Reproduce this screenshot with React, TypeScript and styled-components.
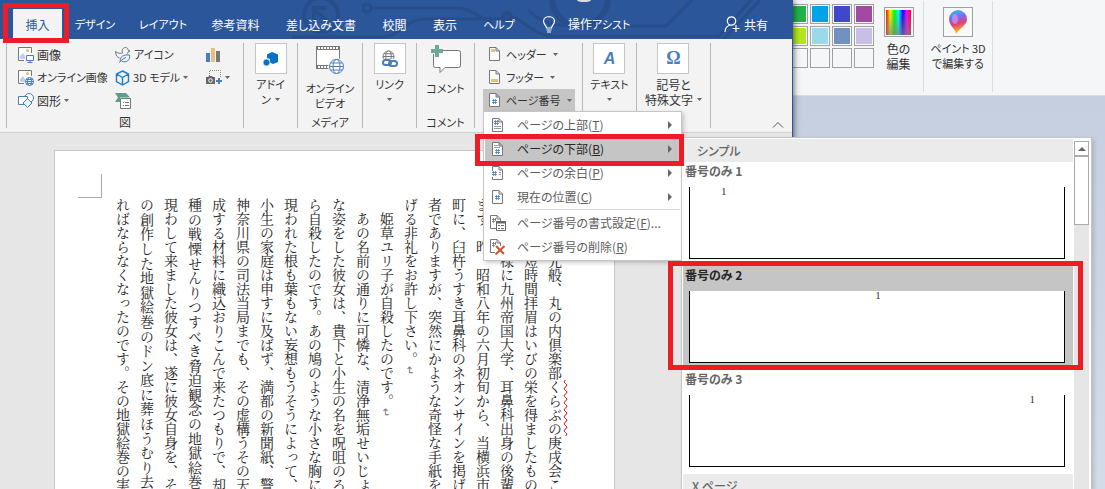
import React from "react";
import styled, { createGlobalStyle, css } from "styled-components";

const blue = "#2b579a";
const red = "#ee1c24";
const accent = "#4a7ebb";

const GlobalStyle = createGlobalStyle`
  * { box-sizing: border-box; }
  body {
    margin: 0;
    font-family: "Noto Sans CJK JP", "Noto Sans", sans-serif;
    font-size: 12px;
    line-height: 15px;
    font-feature-settings: "palt";
    color: #333;
  }
  button { font: inherit; font-feature-settings: inherit; color: inherit; border: 0; padding: 0; margin: 0; background: none; white-space: nowrap; }
  ul { list-style: none; margin: 0; padding: 0; }
  svg { display: block; flex: none; }
`;

const marked = css<{ $mark?: string }>`
  ${(p) =>
    p.$mark &&
    css`
      position: relative;
      &::after {
        content: "";
        position: absolute;
        z-index: 5;
        inset: ${p.$mark};
        border: 5px solid ${red};
        pointer-events: none;
      }
    `}
`;

const Desktop = styled.div`
  display: flex;
  height: 100vh;
  overflow: hidden;
  background: linear-gradient(#c5cfe0 100px, #d3dcea);
`;

/* Kana are set one size smaller than kanji, as in a compact UI face. */
const Kana = styled.span`
  font-size: 11px;
`;

/* ---------- word processor window ---------- */

const WordWindow = styled.main`
  position: relative;
  z-index: 1;
  flex: 1;
  min-width: 0;
  display: flex;
  flex-direction: column;
  border-right: 1px solid ${blue};
  box-shadow: 1px 0 6px rgba(0, 0, 0, 0.55);
`;

const TabBar = styled.nav`
  position: relative;
  display: flex;
  align-items: flex-end;
  height: 39px;
  padding-left: 13px;
  background: ${blue};
  color: #fff;
`;

const Circuit = styled.svg`
  position: absolute;
  right: 0;
  top: 0;
`;

const Tab = styled.button<{ $w: number; $active?: boolean; $mark?: string }>`
  position: relative;
  width: ${(p) => p.$w}px;
  height: 30px;
  background: ${(p) => (p.$active ? "#f3f3f3" : "transparent")};
  color: ${(p) => (p.$active ? blue : "#fff")};
  ${marked}
`;

const Assist = styled.button`
  position: relative;
  display: flex;
  align-items: center;
  gap: 12px;
  height: 30px;
  margin-left: 14px;
`;

const Share = styled(Assist)`
  gap: 4px;
  margin-left: auto;
  margin-right: 24px;
`;

const Ribbon = styled.div`
  position: relative;
  z-index: 2;
  display: flex;
  padding: 4px 0 4px 6px;
  background: #f3f3f3;
  border-bottom: 1px solid #d0d0d0;
`;

const Group = styled.section<{ $w: number; $first?: boolean }>`
  display: flex;
  flex-direction: column;
  align-items: center;
  width: ${(p) => p.$w}px;
  height: 85px;
  border-right: 1px solid #b8b8b8;
  border-left: ${(p) => (p.$first ? "1px solid #b8b8b8" : "0")};
`;

const GroupLabel = styled.span`
  margin-top: auto;
  line-height: 12px;
`;

const Illustrations = styled.div`
  align-self: stretch;
  display: grid;
  grid-template-columns: 97px 91px 1fr;
  grid-auto-rows: 23px;
  padding-left: 11px;
`;

const SmallButton = styled.button`
  display: flex;
  align-items: center;
  gap: 3px;
`;

const BigButton = styled.button`
  display: flex;
  flex-direction: column;
  align-items: center;
  gap: 3px;
`;

const PlainBigButton = styled(BigButton)`
  gap: 0;
  svg { margin: 2px 0 6px; }
`;

const IconBox = styled.span`
  display: flex;
  align-items: center;
  justify-content: center;
  width: 32px;
  height: 31px;
  border: 1px solid #c6c6c6;
  background: #fff;
  color: ${accent};
  font: bold 18px "Liberation Serif", serif;
`;

const ItalicMark = styled.span`
  font: italic bold 16px "Liberation Sans", sans-serif;
`;

const Caption = styled.span`
  display: flex;
  flex-direction: column;
  align-items: center;
`;

const CaptionLine = styled.span<{ $kana?: boolean }>`
  display: flex;
  align-items: center;
  gap: 4px;
  height: 15px;
  font-size: ${(p) => (p.$kana ? 11 : 12)}px;
`;

const Stack = styled.div`
  align-self: stretch;
  display: grid;
  grid-auto-rows: 23px;
  padding: 0 7px 0 8px;
`;

const MenuAnchor = styled.div`
  position: relative;
  height: 22px;
`;

const RowButton = styled.button<{ $open?: boolean }>`
  display: flex;
  align-items: center;
  gap: 6px;
  width: 100%;
  height: 22px;
  padding-left: 5px;
  font-size: 11px;
  background: ${(p) => (p.$open ? "#c5c5c5" : "transparent")};
`;

const Collapse = styled.button`
  align-self: flex-end;
  margin-left: auto;
  margin-right: 8px;
`;

/* ---------- drop-down menu and gallery ---------- */

const Menu = styled.ul`
  position: absolute;
  top: 100%;
  left: 0;
  width: 199px;
  padding: 1px;
  border: 1px solid #c6c6c6;
  background: #fff;
  box-shadow: 2px 2px 4px rgba(0, 0, 0, 0.2);
`;

const MenuItem = styled.li<{ $active?: boolean; $mark?: string }>`
  height: 24px;
  background: ${(p) => (p.$active ? "#c5c5c5" : "transparent")};
  color: ${(p) => (p.$active ? "#262626" : "#5c5c5c")};
  ${marked}
`;

const MenuButton = styled.button`
  display: grid;
  grid-template-columns: 28px 1fr 12px;
  align-items: center;
  width: 100%;
  height: 24px;
  padding-left: 4px;
  text-align: left;
`;

const MenuText = styled.span`
  padding-bottom: 2px;
`;

const MenuRule = styled.li`
  height: 1px;
  margin: 0 0 1px 32px;
  background: #d4d8de;
`;

const Gallery = styled.div`
  position: absolute;
  left: calc(100% + 1px);
  top: 0;
  display: flex;
  gap: 1px;
  width: 411px;
  padding: 1px;
  border: 1px solid #c6c6c6;
  background: #fff;
  color: #666;
  box-shadow: 2px 2px 4px rgba(0, 0, 0, 0.15);
`;

const GalleryList = styled.div`
  flex: 1;
`;

const GalleryHeading = styled.h2<{ $indent: number }>`
  margin: 0;
  padding-left: ${(p) => p.$indent}px;
  background: #ebebeb;
  font-size: 12px;
  line-height: 23px;
  font-weight: 500;
`;

const GalleryItem = styled.button<{ $active?: boolean; $mark?: string }>`
  display: block;
  width: 100%;
  height: 104px;
  text-align: left;
  font-weight: bold;
  background: ${(p) => (p.$active ? "#c5c5c5" : "transparent")};
  color: ${(p) => (p.$active ? "#262626" : "#666")};
  ${marked}
`;

const GalleryName = styled.span`
  display: block;
  height: 25px;
  padding-left: 2px;
  line-height: 18px;
`;

const Thumb = styled.span<{ $align: string }>`
  display: block;
  height: 72px;
  margin: 0 8px 7px 6px;
  padding: 0 29px 0 31px;
  border: 1px solid #000;
  border-top: 0;
  background: #fff;
  color: #333;
  font: 11px/9px "Liberation Serif", serif;
  text-align: ${(p) => p.$align};
`;

const ScrollBar = styled.div`
  width: 15px;
  margin: 2px 1px 0 0;
  background: #e6e6e6;
`;

const ScrollUp = styled.button`
  display: flex;
  align-items: center;
  justify-content: center;
  width: 15px;
  height: 15px;
  border: 1px solid #ababab;
  background: #fff;
`;

const ScrollThumb = styled.div`
  height: 69px;
  border: 1px solid #ababab;
  background: #fff;
`;

/* ---------- document ---------- */

const Workspace = styled.div`
  flex: 1;
  min-height: 0;
  display: flex;
  padding: 17px 0 0 54px;
  background: #e6e6e6;
  overflow: hidden;
`;

const Page = styled.article`
  display: flex;
  justify-content: space-between;
  align-items: flex-start;
  width: 561px;
  height: 800px;
  border: 1px solid #c6c6c6;
  background: #fff;
`;

const CornerMark = styled.div`
  width: 24px;
  height: 24px;
  margin: 23px 0 0 23px;
  border: solid #aaa;
  border-width: 0 1px 1px 0;
`;

const Prose = styled.div`
  height: 291px;
  margin: 47px 47px 0 0;
  writing-mode: vertical-rl;
  font-family: "Noto Serif CJK JP", "Noto Sans CJK JP", serif;
  font-feature-settings: normal;
  font-size: 14px;
  line-height: 24px;
  color: #222;
`;

const Line = styled.p<{ $spread?: boolean }>`
  margin: 0;
  white-space: ${(p) => (p.$spread ? "normal" : "pre")};
  text-align-last: ${(p) => (p.$spread ? "justify" : "start")};
  text-justify: inter-character;
`;

const Misspelt = styled.span`
  text-decoration: underline wavy #e00000 1px;
  text-underline-position: right;
`;

const Return = styled.span`
  color: #777;
  font-size: 11px;
`;

/* ---------- paint window ---------- */

const PaintWindow = styled.aside`
  width: 312px;
`;

const PaintRibbon = styled.div`
  display: flex;
  height: 96px;
  padding-top: 1px;
  border-bottom: 1px solid #d9dbde;
  background: #f5f6f8;
`;

const Palette = styled.div`
  display: grid;
  grid-template-columns: repeat(4, 20px);
  grid-auto-rows: 20px;
  gap: 2px;
  justify-content: end;
  align-content: start;
  width: 81px;
  padding-top: 3px;
  overflow: hidden;
`;

const Swatch = styled.button<{ $c: string }>`
  border: 1px solid #a0a0a0;
  background: ${(p) => p.$c};
  box-shadow: inset 0 0 0 1px #f8f8f8;
`;

const PaintGroup = styled.div<{ $w: number }>`
  display: flex;
  justify-content: center;
  align-items: flex-start;
  width: ${(p) => p.$w}px;
  height: 91px;
  padding-top: 6px;
  border-right: 1px solid #dcdde0;
`;

const PaintButton = styled(BigButton)`
  gap: 4px;
`;

const PaintBox = styled.span`
  display: flex;
  align-items: center;
  justify-content: center;
  width: 30px;
  height: 30px;
  border: 1px solid #a0a0a0;
  background: #f8f8f8;
`;

const Spectrum = styled.span`
  width: 25px;
  height: 25px;
  background: linear-gradient(transparent, rgba(128, 128, 128, 0.7)),
    linear-gradient(90deg, #f00, #ff0, #0f0, #0ff, #00f, #f0f, #f00);
`;

/* ---------- icons ---------- */

const Caret = () => (
  <svg width="5" height="3" aria-hidden="true"><path d="M0 0h5L2.500 3z" fill="#666" /></svg>
);

const Right = () => (
  <svg width="4" height="8" aria-hidden="true"><path d="M0 0l4 4-4 4z" fill="#666" /></svg>
);

const PictureBase = () => (
  <>
    <path d="M6 13.500H.5V.5h13V6" fill="#fff" stroke="#777" />
    <circle cx="9.500" cy="3.500" r="1.500" fill="#e8b96f" />
    <path d="M2 12V9l3-3 2 3v3z" fill="#bcd0e6" />
  </>
);

const Globe = ({ x, y, r, c = accent }: { x: number; y: number; r: number; c?: string }) => (
  <g fill="#fff" stroke={c}>
    <circle cx={x} cy={y} r={r} />
    <ellipse cx={x} cy={y} rx={r / 2} ry={r} />
    <path d={`M${x - r} ${y}h${r * 2}M${x - r * 0.85} ${y - r / 2}h${r * 1.7}M${x - r * 0.85} ${y + r / 2}h${r * 1.7}`} />
  </g>
);

const PictureIcon = () => (
  <svg width="16" height="16" aria-hidden="true">
    <PictureBase />
    <path d="M8.500 8.500h7v5h-7zM12 14v1.500M9.500 15.500h5" fill="#fff" stroke={accent} />
  </svg>
);

const OnlinePictureIcon = () => (
  <svg width="16" height="16" aria-hidden="true">
    <PictureBase />
    <Globe x={11.5} y={11.5} r={4} />
  </svg>
);

const ShapesIcon = () => (
  <svg width="16" height="16" aria-hidden="true" fill="#fff" stroke={accent}>
    <circle cx="11" cy="5" r="4.500" />
    <path d="M.5 3.500h9v8h-9z" />
    <path d="M9.500 5.500l4.500 4.500-4.500 4.500L5 10z" fill="#e8f0f8" />
  </svg>
);

const BirdIcon = () => (
  <svg width="16" height="16" aria-hidden="true" fill="none">
    <path d="M.5 4.500c2 2 5 2 7 1.500C6.500 3 8 .5 10.500.5c2 0 2.500 1.500 2.500 2.500l2 1-2 1c0 1-.5 2-1 2.500M.5 4.500c0 4 2 6 4 6.500" stroke="#777" />
    <path d="M5.500 14.500c-1-5 3-7 9-6.500 1 5-3 8.500-8 6M4 15.500c2-2 4-4 7-5" fill="#e8f0f8" stroke={accent} />
  </svg>
);

const CubeIcon = () => (
  <svg width="15" height="16" aria-hidden="true" fill="none" stroke="#1a80c8" strokeWidth="1.400">
    <path d="M7.500 1l6 3v7.500l-6 3.500-6-3.500V4zM1.500 4l6 3.500 6-3.500M7.500 7.500V15" />
  </svg>
);

const SmartArtIcon = () => (
  <svg width="16" height="16" aria-hidden="true">
    <path d="M0 0h11l4 4.500H5V9H0l3-4.500z" fill="#5a9f88" />
    <path d="M5.500 5.500h10v10h-10z" fill="#fff" stroke="#777" />
    <path d="M8 9.500h1M10 9.500h4M8 12.500h1M10 12.500h4" stroke="#777" />
  </svg>
);

const ChartIcon = () => (
  <svg width="14" height="14" aria-hidden="true">
    <path d="M0 5h4v9H0z" fill={accent} />
    <path d="M5 0h4v14H5z" fill="#e8bf7c" />
    <path d="M10 3h4v11h-4z" fill="#777" />
  </svg>
);

const ScreenshotIcon = () => (
  <svg width="16" height="15" aria-hidden="true">
    <path d="M3.500 6V.5h11V8" fill="none" stroke="#888" strokeDasharray="1 1" />
    <path d="M0 7h2l1-1h3l1 1h2v7H0z" fill="#666" />
    <circle cx="4.500" cy="10.500" r="1.800" fill="#666" stroke="#fff" />
    <path d="M13 8v6M10 11h6" stroke={accent} strokeWidth="2" />
  </svg>
);

const AddInIcon = () => (
  <svg width="16" height="16" aria-hidden="true" fill="#0072c6">
    <path d="M9 1l6 2.500v7.500l-5 2-3-1.500V8L4 7V3.500z" />
    <circle cx="3.500" cy="11.500" r="3.400" stroke="#fff" strokeWidth=".6" />
  </svg>
);

const VideoIcon = () => (
  <svg width="30" height="30" aria-hidden="true">
    <path d="M1.500 1.500h23v22h-23z" fill="#fff" stroke="#777" />
    <path d="M1.500 3h23M1.500 22h23" stroke="#777" strokeWidth="4" />
    <path d="M3 3h21M3 22h21" stroke="#fff" strokeWidth="2" strokeDasharray="2 1" />
    <circle cx="21.500" cy="21.500" r="8.500" fill="#f3f3f3" />
    <Globe x={21.5} y={21.5} r={7} />
  </svg>
);

const LinkIcon = () => (
  <svg width="18" height="18" aria-hidden="true">
    <Globe x={7.5} y={6.5} r={5.5} c="#777" />
    <path d="M1 9h16v8H1z" fill="#fff" />
    <g fill="none" stroke={accent} strokeWidth="2">
      <rect x="2" y="10" width="8" height="5" rx="2.500" />
      <rect x="8" y="11" width="8" height="5" rx="2.500" />
    </g>
  </svg>
);

const CommentIcon = () => (
  <svg width="30" height="30" aria-hidden="true">
    <path d="M2.500 5.500h25a2 2 0 012 2v13a2 2 0 01-2 2H14l-5 5v-5H4.500a2 2 0 01-2-2z" fill="#fff" stroke="#777" />
    <path d="M6 0v12M0 6h12" stroke="#f3f3f3" strokeWidth="6" />
    <path d="M6 0v12M0 6h12" stroke="#6fa796" strokeWidth="4" />
  </svg>
);

const Sheet = () => <path d="M1.500.5H8L11.500 4v9.500h-10zM8 .5V4h3.500" fill="#fff" stroke="#777" />;

const Hash = ({ x, y }: { x: number; y: number }) => (
  <path d={`M${x + 1.5} ${y}v5M${x + 3.5} ${y}v5M${x} ${y + 1.5}h5M${x} ${y + 3.5}h5`} fill="none" stroke={accent} strokeWidth=".8" />
);

const HeaderIcon = () => (
  <svg width="12" height="14" aria-hidden="true"><Sheet /><path d="M3 2h4v3H3z" fill="#e8bf7c" /></svg>
);
const FooterIcon = () => (
  <svg width="12" height="14" aria-hidden="true"><Sheet /><path d="M3 9h7v3H3z" fill="#e8bf7c" /></svg>
);
const NumberIcon = () => (
  <svg width="12" height="14" aria-hidden="true"><Sheet /><Hash x={4} y={6} /></svg>
);

const MenuIcon = ({ kind }: { kind: string }) => (
  <svg width="18" height="16" aria-hidden="true">
    <g transform={kind === "format" || kind === "remove" ? "translate(0 0)" : "translate(2 1)"}>
      <Sheet />
      {kind === "top" && (<><Hash x={3} y={2} /><path d="M3 8.500h7M3 10.500h7" stroke="#999" /></>)}
      {kind === "bottom" && (<><Hash x={4} y={7} /><path d="M3 3.500h4M3 5.500h6" stroke="#999" /></>)}
      {kind === "margin" && (<><path d="M0 5h3v6H0z" fill="#fff" /><Hash x={1} y={5} /><path d="M8 6.500h2M8 8.500h2" stroke="#999" /></>)}
      {kind === "here" && <Hash x={4} y={5} />}
      {kind === "format" && (
        <>
          <path d="M3 4.500h4M3 6.500h3M4.500 3v5M6.500 3v3" stroke="#777" strokeWidth=".8" />
          <path d="M7.500 6.500h9v9h-9z" fill="#fff" stroke="#666" />
          <path d="M7 7.500h10" stroke="#666" strokeWidth="2" />
          <path d="M9 10.500h2M12 10.500h3M9 13.500h2M12 13.500h3" stroke="#666" />
        </>
      )}
      {kind === "remove" && (
        <>
          <path d="M3 4.500h4M3 6.500h3M4.500 3v5M6.500 3v3" stroke="#777" strokeWidth=".8" />
          <path d="M6 7h11v9H6z" fill="#fff" />
          <path d="M7 7l8 8M15.500 7l-9 8.500" stroke="#d35230" strokeWidth="2" />
        </>
      )}
    </g>
  </svg>
);

const BulbIcon = () => (
  <svg width="14" height="17" aria-hidden="true" fill="none" stroke="#fff" strokeWidth="1.200">
    <path d="M4.500 12c0-2.500-3-3.500-3-7A5 5 0 017 .8 5 5 0 0112.500 5c0 3.500-3 4.500-3 7zM4.500 14h5M5 16h4" />
  </svg>
);

const PersonIcon = () => (
  <svg width="16" height="17" aria-hidden="true" fill="none" stroke="#fff" strokeWidth="1.200">
    <circle cx="7.500" cy="5" r="4.200" />
    <path d="M1 16c0-4 2-6 5-7M12 9v7M8.500 12.500h7" />
  </svg>
);

const PaintPinIcon = () => (
  <svg width="18" height="24" aria-hidden="true">
    <defs>
      <linearGradient id="pin" x1="0" y1="0" x2="0.200" y2="1">
        <stop offset="0" stopColor="#1fd0f0" />
        <stop offset=".35" stopColor="#7a6ff0" />
        <stop offset=".65" stopColor="#e0407a" />
        <stop offset="1" stopColor="#ffc400" />
      </linearGradient>
    </defs>
    <path d="M9 0a9 9 0 019 9c0 6-6 8-11 15 0-5-7-8-7-15a9 9 0 019-9z" fill="url(#pin)" />
    <ellipse cx="6" cy="9" rx="3" ry="5" fill="#d9a0f5" opacity=".6" />
  </svg>
);

/* ---------- data ---------- */

const tabs: { name: string; w: number; kana?: boolean }[] = [
  { name: "デザイン", w: 66, kana: true },
  { name: "レイアウト", w: 70, kana: true },
  { name: "参考資料", w: 75 },
  { name: "差し込み文書", w: 96 },
  { name: "校閲", w: 51 },
  { name: "表示", w: 50 },
  { name: "ヘルプ", w: 58, kana: true },
];

const proseStart = [
  "かいで、短時間拝眉はいびの栄を得ましたもの",
  "で、御同様に九州帝国大学、耳鼻科出身の後輩",
  "ます。昨、昭和八年の六月初旬から、当横浜市",
  "町に、臼杵うすき耳鼻科のネオンサインを掲げ",
  "者でありますが、突然にかような奇怪な手紙を",
];

const proseEnd = [
  "　あの名前の通りに可憐な、清浄無垢せいじょ",
  "な姿をした彼女は、貴下と小生の名を呪咀のろ",
  "ら自殺したのです。あの鳩のような小さな胸に",
  "現われた根も葉もない妄想もうそうによって、",
  "小生の家庭は申すに及ばず、満都の新聞紙、警",
  "神奈川県の司法当局までも、その虚構うその天",
  "成する材料に織込おりこんで来たつもりで、却",
  "種の戦慄せんりつすべき脅迫観念の地獄絵巻",
  "現わして来ました彼女は、遂に彼女自身を、そ",
  "の創作した地獄絵巻のドン底に葬ほうむり去",
  "ればならなくなったのです。その地獄絵巻の実",
];

const swatches = [
  "#22b14c", "#00a2e8", "#3f48cc", "#a349a4",
  "#b5e61d", "#99d9ea", "#7092be", "#c8bfe7",
  "#f5f6f8", "#f5f6f8", "#f5f6f8", "#f5f6f8",
];

const places: [string, string, string][] = [
  ["top", "ページの上部", "T"],
  ["bottom", "ページの下部", "B"],
  ["margin", "ページの余白", "P"],
  ["here", "現在の位置", "C"],
];

const PageNumberGallery = () => (
  <Gallery>
    <GalleryList>
      <GalleryHeading $indent={14}>シンプル</GalleryHeading>
      <GalleryItem>
        <GalleryName>番号のみ 1</GalleryName>
        <Thumb $align="left">1</Thumb>
      </GalleryItem>
      <GalleryItem $active $mark="-5px -10px 0 -15px">
        <GalleryName>番号のみ 2</GalleryName>
        <Thumb $align="center">1</Thumb>
      </GalleryItem>
      <GalleryItem>
        <GalleryName>番号のみ 3</GalleryName>
        <Thumb $align="right">1</Thumb>
      </GalleryItem>
      <GalleryHeading $indent={9}>X ページ</GalleryHeading>
    </GalleryList>
    <ScrollBar>
      <ScrollUp aria-label="上へスクロール">
        <svg width="8" height="4" aria-hidden="true"><path d="M0 4h8L4 0z" fill="#666" /></svg>
      </ScrollUp>
      <ScrollThumb />
    </ScrollBar>
  </Gallery>
);

export default function App() {
  return (
    <Desktop>
      <GlobalStyle />
      <WordWindow>
        <TabBar>
          <Circuit width="500" height="39" fill="none" stroke="#274e8b" strokeWidth="4" aria-hidden="true">
            <circle cx="29" cy="15" r="17" strokeWidth="4" />
            <path d="M36 23L24 11M22 20V8h12" strokeWidth="4" />
            <circle cx="75" cy="8" r="4" strokeWidth="3" />
            <path d="M80 8h84c14 0 20 8 36 14M0 37h90c18 0 24-18 42-18h80M215 16c14 0 26 20 44 20h168l32-36" strokeWidth="3" />
            <circle cx="215" cy="17" r="4" />
            <circle cx="288" cy="-2" r="28" strokeWidth="6" />
            <path d="M236 10c16 16 34 16 50 16h88l26-26M432 39l36-39" strokeWidth="3" />
            <ellipse cx="292" cy="0" rx="7" ry="2" fill="#ddd" stroke="none" />
          </Circuit>
          <Tab $w={49} $active $mark="-6px -7px -4px -10px">挿入</Tab>
          {tabs.map((t) => (
            <Tab key={t.name} $w={t.w}>{t.kana ? <Kana>{t.name}</Kana> : t.name}</Tab>
          ))}
          <Assist><BulbIcon /><span>操作<Kana>アシスト</Kana></span></Assist>
          <Share><PersonIcon />共有</Share>
        </TabBar>

        <Ribbon>
          <Group $w={238} $first>
            <Illustrations>
              <SmallButton><PictureIcon />画像</SmallButton>
              <SmallButton><BirdIcon /><Kana>アイコン</Kana></SmallButton>
              <SmallButton aria-label="グラフ"><ChartIcon /></SmallButton>
              <SmallButton><OnlinePictureIcon /><Kana>オンライン画像</Kana></SmallButton>
              <SmallButton><CubeIcon /><Kana>3D モデル</Kana><Caret /></SmallButton>
              <SmallButton aria-label="スクリーンショット"><ScreenshotIcon /><Caret /></SmallButton>
              <SmallButton><ShapesIcon />図形<Caret /></SmallButton>
              <SmallButton aria-label="SmartArt"><SmartArtIcon /></SmallButton>
            </Illustrations>
            <GroupLabel>図</GroupLabel>
          </Group>
          <Group $w={54}>
            <BigButton>
              <IconBox><AddInIcon /></IconBox>
              <Caption><CaptionLine $kana>アドイ</CaptionLine><CaptionLine $kana>ン<Caret /></CaptionLine></Caption>
            </BigButton>
          </Group>
          <Group $w={65}>
            <PlainBigButton>
              <VideoIcon />
              <Caption><CaptionLine $kana>オンライン</CaptionLine><CaptionLine $kana>ビデオ</CaptionLine></Caption>
            </PlainBigButton>
            <GroupLabel><Kana>メディア</Kana></GroupLabel>
          </Group>
          <Group $w={54}>
            <BigButton>
              <IconBox><LinkIcon /></IconBox>
              <Caption><CaptionLine $kana>リンク</CaptionLine><CaptionLine><Caret /></CaptionLine></Caption>
            </BigButton>
          </Group>
          <Group $w={58}>
            <PlainBigButton>
              <CommentIcon />
              <Caption><CaptionLine $kana>コメント</CaptionLine></Caption>
            </PlainBigButton>
            <GroupLabel><Kana>コメント</Kana></GroupLabel>
          </Group>
          <Group $w={108}>
            <Stack>
              <RowButton><HeaderIcon />ヘッダー<Caret /></RowButton>
              <RowButton><FooterIcon />フッター<Caret /></RowButton>
              <MenuAnchor>
                <RowButton $open><NumberIcon />ページ番号<Caret /></RowButton>
                <Menu>
                  {places.map(([kind, label, key]) => {
                    const open = kind === "bottom";
                    return (
                      <MenuItem key={kind} $active={open} $mark={open ? "-3px -4px -5px -10px" : undefined}>
                        <MenuButton>
                          <MenuIcon kind={kind} />
                          <MenuText>{label}(<u>{key}</u>)</MenuText>
                          <Right />
                        </MenuButton>
                        {open && <PageNumberGallery />}
                      </MenuItem>
                    );
                  })}
                  <MenuRule />
                  <MenuItem>
                    <MenuButton><MenuIcon kind="format" /><MenuText>ページ番号の書式設定(<u>F</u>)...</MenuText></MenuButton>
                  </MenuItem>
                  <MenuItem>
                    <MenuButton><MenuIcon kind="remove" /><MenuText>ページ番号の削除(<u>R</u>)</MenuText></MenuButton>
                  </MenuItem>
                </Menu>
              </MenuAnchor>
            </Stack>
          </Group>
          <Group $w={54}>
            <BigButton>
              <IconBox><ItalicMark>A</ItalicMark></IconBox>
              <Caption><CaptionLine $kana>テキスト</CaptionLine><CaptionLine><Caret /></CaptionLine></Caption>
            </BigButton>
          </Group>
          <Group $w={74}>
            <BigButton>
              <IconBox>Ω</IconBox>
              <Caption><CaptionLine>記号と</CaptionLine><CaptionLine>特殊文字<Caret /></CaptionLine></Caption>
            </BigButton>
          </Group>
          <Collapse aria-label="リボンを折りたたむ">
            <svg width="12" height="6" aria-hidden="true" fill="none" stroke="#555"><path d="M1 5.500l5-5 5 5" /></svg>
          </Collapse>
        </Ribbon>

        <Workspace>
          <Page>
            <CornerMark />
            <Prose>
              <Line>　小生は先般、丸の内倶楽部<Misspelt>くらぶの</Misspelt>庚戌会こ</Line>
              {proseStart.map((t) => <Line key={t}>{t}</Line>)}
              <Line>げる非礼をお許し下さい。<Return>↵</Return></Line>
              <Line>　姫草ユリ子が自殺したのです。<Return>↵</Return></Line>
              {proseEnd.map((t) => <Line key={t} $spread={t.length === 20}>{t}</Line>)}
            </Prose>
          </Page>
        </Workspace>
      </WordWindow>

      <PaintWindow>
        <PaintRibbon>
          <Palette>
            {swatches.map((c, i) => <Swatch key={i} $c={c} aria-label={`色 ${i + 1}`} />)}
          </Palette>
          <PaintGroup $w={50}>
            <PaintButton>
              <PaintBox><Spectrum /></PaintBox>
              <Caption><CaptionLine>色の</CaptionLine><CaptionLine>編集</CaptionLine></Caption>
            </PaintButton>
          </PaintGroup>
          <PaintGroup $w={69}>
            <PaintButton>
              <PaintBox><PaintPinIcon /></PaintBox>
              <Caption><CaptionLine $kana>ペイント 3D</CaptionLine><CaptionLine $kana>で編集する</CaptionLine></Caption>
            </PaintButton>
          </PaintGroup>
        </PaintRibbon>
      </PaintWindow>
    </Desktop>
  );
}
